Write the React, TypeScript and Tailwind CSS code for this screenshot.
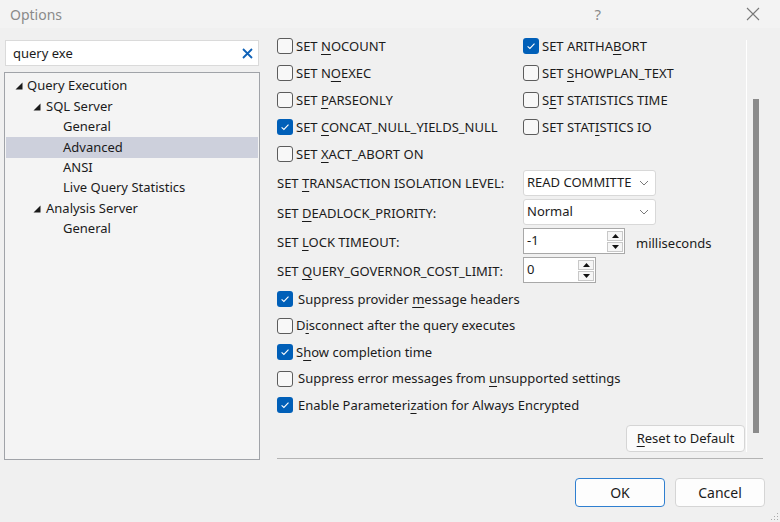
import React from "react";

const FONT = { fontFamily: '"Noto Sans", "Open Sans", sans-serif' };

function U({ children }: { children: React.ReactNode }) {
  return <span className="underline underline-offset-[3px] decoration-[1px]">{children}</span>;
}

function Box({ checked }: { checked?: boolean }) {
  if (checked)
    return (
      <span className="w-4 h-4 shrink-0 rounded-[3px] bg-[#005fb8] flex items-center justify-center">
        <svg width="10" height="8" viewBox="0 0 10 8">
          <path d="M1.6 4.3 L3.9 6.4 L8.5 1.6" stroke="white" strokeWidth="1.1" fill="none" />
        </svg>
      </span>
    );
  return <span className="w-4 h-4 shrink-0 rounded-[3px] border border-[#5c5c5c] bg-[#f8f8f8]" />;
}

function Check({ checked, children, gap = "gap-[3px]" }: { checked?: boolean; children: React.ReactNode; gap?: string }) {
  return (
    <div className={`flex items-center ${gap} h-[27px] whitespace-nowrap`}>
      <Box checked={checked} />
      <span className="leading-[16px]">{children}</span>
    </div>
  );
}

function Check2({ checked, children, gap = "gap-[5px]" }: { checked?: boolean; children: React.ReactNode; gap?: string }) {
  return (
    <div className={`flex items-center ${gap} h-[26.5px] whitespace-nowrap`}>
      <Box checked={checked} />
      <span>{children}</span>
    </div>
  );
}

function Chevron() {
  return (
    <svg width="10" height="6" viewBox="0 0 10 6">
      <path d="M1 1 L5 5 L9 1" stroke="#7a7a7a" strokeWidth="1" fill="none" />
    </svg>
  );
}

function Combo({ text }: { text: string }) {
  return (
    <div className="w-[133px] h-[26px] bg-white border border-[#d8d8d8] rounded-[3px] flex items-center justify-between pl-[3px] pr-[6px]">
      <span className="whitespace-nowrap overflow-hidden">{text}</span>
      <Chevron />
    </div>
  );
}

function Spin({ value, width }: { value: string; width: string }) {
  return (
    <div className={`${width} h-[26px] bg-white border border-[#a8a8a8] flex items-center justify-between pl-[3px] pr-[1px]`}>
      <span>{value}</span>
      <div className="flex flex-col gap-[1px]">
        <div className="w-[16px] h-[10px] border border-[#c8c8c8] bg-[#f6f6f6] flex items-center justify-center">
          <svg width="7" height="4" viewBox="0 0 7 4"><path d="M0 4 L3.5 0 L7 4 Z" fill="#111" /></svg>
        </div>
        <div className="w-[16px] h-[10px] border border-[#c8c8c8] bg-[#f6f6f6] flex items-center justify-center">
          <svg width="7" height="4" viewBox="0 0 7 4"><path d="M0 0 L3.5 4 L7 0 Z" fill="#111" /></svg>
        </div>
      </div>
    </div>
  );
}

function Tri() {
  return (
    <svg width="8" height="8" viewBox="0 0 8 8" className="shrink-0">
      <path d="M7.5 0.5 L7.5 7.5 L0.5 7.5 Z" fill="#1a1a1a" />
    </svg>
  );
}

function TreeRow({ level, expand, selected, children }: { level: number; expand?: boolean; selected?: boolean; children: React.ReactNode }) {
  const pl = level === 0 ? "pl-[9px] gap-[4px]" : level === 1 ? "pl-[27px] gap-[5px]" : "pl-[57px]";
  return (
    <div className={`h-[20.4px] flex items-center ${pl} ${selected ? "bg-[#cdd0dc]" : ""}`}>
      {expand && <Tri />}
      <span className="whitespace-nowrap">{children}</span>
    </div>
  );
}

export default function App() {
  return (
    <div style={FONT} className="w-[780px] h-[522px] bg-[#f0f0f0] text-[13px] text-[#1b1b1b] flex flex-col overflow-hidden relative">
      {/* title bar */}
      <div className="h-[28px] bg-[#f3f3f3] flex items-center justify-between pl-[10px] pr-[20px] shrink-0">
        <span className="text-[14px] text-[#8a8a8a]">Options</span>
        <div className="flex items-center gap-[145px]">
          <span className="text-[15px] text-[#8a8a8a]">?</span>
          <svg width="14" height="14" viewBox="0 0 14 14">
            <path d="M1 1 L13 13 M13 1 L1 13" stroke="#777" strokeWidth="1.1" />
          </svg>
        </div>
      </div>
      <div className="flex flex-1 pt-[10px]">
        {/* left */}
        <div className="w-[260px] shrink-0 pl-[4px] flex flex-col">
          <div className="ml-[1px] mt-[2px] w-[254px] h-[26px] bg-white border border-[#dadada] flex items-center justify-between pl-[7px] pr-[5px]">
            <span className="mt-[1px]">query exe</span>
            <svg width="11" height="11" viewBox="0 0 11 11">
              <path d="M1 1 L10 10 M10 1 L1 10" stroke="#0f62b8" strokeWidth="1.8" />
            </svg>
          </div>
          <div className="mt-[6px] w-[256px] h-[388px] border border-[#a0a3a8] bg-[#f4f4f4] pt-[3px] px-[1px]">
            <TreeRow level={0} expand>Query Execution</TreeRow>
            <TreeRow level={1} expand>SQL Server</TreeRow>
            <TreeRow level={2}>General</TreeRow>
            <TreeRow level={2} selected>Advanced</TreeRow>
            <TreeRow level={2}>ANSI</TreeRow>
            <TreeRow level={2}>Live Query Statistics</TreeRow>
            <TreeRow level={1} expand>Analysis Server</TreeRow>
            <TreeRow level={2}>General</TreeRow>
          </div>
        </div>
        {/* right */}
        <div className="flex-1 flex flex-col pl-[17px]">
          <div className="flex h-[414px]">
            <div className="w-[469px] overflow-hidden h-[414px]">
              <div className="-mt-[6px]">
                <div className="grid grid-cols-[246px_1fr]">
                  <Check><span>SET <U>N</U>OCOUNT</span></Check>
                  <Check checked><span>SET ARITHA<U>B</U>ORT</span></Check>
                  <Check><span>SET N<U>O</U>EXEC</span></Check>
                  <Check><span>SET <U>S</U>HOWPLAN_TEXT</span></Check>
                  <Check><span>SET <U>P</U>ARSEONLY</span></Check>
                  <Check><span>S<U>E</U>T STATISTICS TIME</span></Check>
                  <Check checked><span>SET <U>C</U>ONCAT_NULL_YIELDS_NULL</span></Check>
                  <Check><span>SET STAT<U>I</U>STICS IO</span></Check>
                  <Check><span>SET <U>X</U>ACT_ABORT ON</span></Check>
                </div>
                <div className="mt-[3px] flex flex-col gap-[3px]">
                  <div className="flex items-center">
                    <span className="w-[246px] mt-[2px]">SET <U>T</U>RANSACTION ISOLATION LEVEL:</span>
                    <Combo text="READ COMMITTE" />
                  </div>
                  <div className="flex items-center">
                    <span className="w-[246px] mt-[4px]">SET <U>D</U>EADLOCK_PRIORITY:</span>
                    <Combo text="Normal" />
                  </div>
                  <div className="flex items-center">
                    <span className="w-[246px] mt-[3px]">SET <U>L</U>OCK TIMEOUT:</span>
                    <Spin value="-1" width="w-[102px]" />
                    <span className="ml-[11px] mt-[6px]">milliseconds</span>
                  </div>
                  <div className="flex items-center">
                    <span className="w-[246px] mt-[4px]">SET <U>Q</U>UERY_GOVERNOR_COST_LIMIT:</span>
                    <Spin value="0" width="w-[73px]" />
                  </div>
                </div>
                <div className="mt-[3px]">
                  <Check2 checked>Suppress provider <U>m</U>essage headers</Check2>
                  <Check2 gap="gap-[3px]">D<U>i</U>sconnect after the query executes</Check2>
                  <Check2 checked gap="gap-[3px]">S<U>h</U>ow completion time</Check2>
                  <Check2>Suppress error messages from <U>u</U>nsupported settings</Check2>
                  <Check2 checked>Enable Parameteri<U>z</U>ation for Always Encrypted</Check2>
                </div>
                <div className="flex justify-end mt-[6.5px] pr-[1px]">
                  <div className="w-[119px] h-[27px] bg-[#fbfbfb] border border-[#d5d5d5] rounded-[4px] flex items-center justify-center">
                    <span><U>R</U>eset to Default</span>
                  </div>
                </div>
              </div>
            </div>
            {/* scrollbar */}
            <div className="flex mt-[2px] h-[412px]">
              <div className="w-[1px] bg-white h-full" />
              <div className="ml-[6px] mt-[59px] w-[6px] h-[334px] bg-[#8b8b8b]" />
            </div>
          </div>
          <div className="mt-[6px] w-[486px] h-[1px] bg-[#b4b4b4]" />
          <div className="mt-[19px] flex gap-[10px] pl-[298px]">
            <div className="w-[90px] h-[29px] bg-[#fdfdfd] border border-[#2f7fd0] rounded-[4px] flex items-center justify-center text-[14px]">OK</div>
            <div className="w-[90px] h-[29px] bg-[#fdfdfd] border border-[#d5d5d5] rounded-[4px] flex items-center justify-center text-[14px]">Cancel</div>
          </div>
        </div>
      </div>
      <svg className="absolute right-[1px] bottom-[1px]" width="8" height="8" viewBox="0 0 8 8">
        <rect x="6" y="0" width="1" height="1" fill="#aaa" />
        <rect x="3" y="3" width="1" height="1" fill="#aaa" />
        <rect x="6" y="3" width="1" height="1" fill="#aaa" />
        <rect x="0" y="6" width="1" height="1" fill="#aaa" />
        <rect x="3" y="6" width="1" height="1" fill="#aaa" />
        <rect x="6" y="6" width="1" height="1" fill="#aaa" />
      </svg>
    </div>
  );
}
